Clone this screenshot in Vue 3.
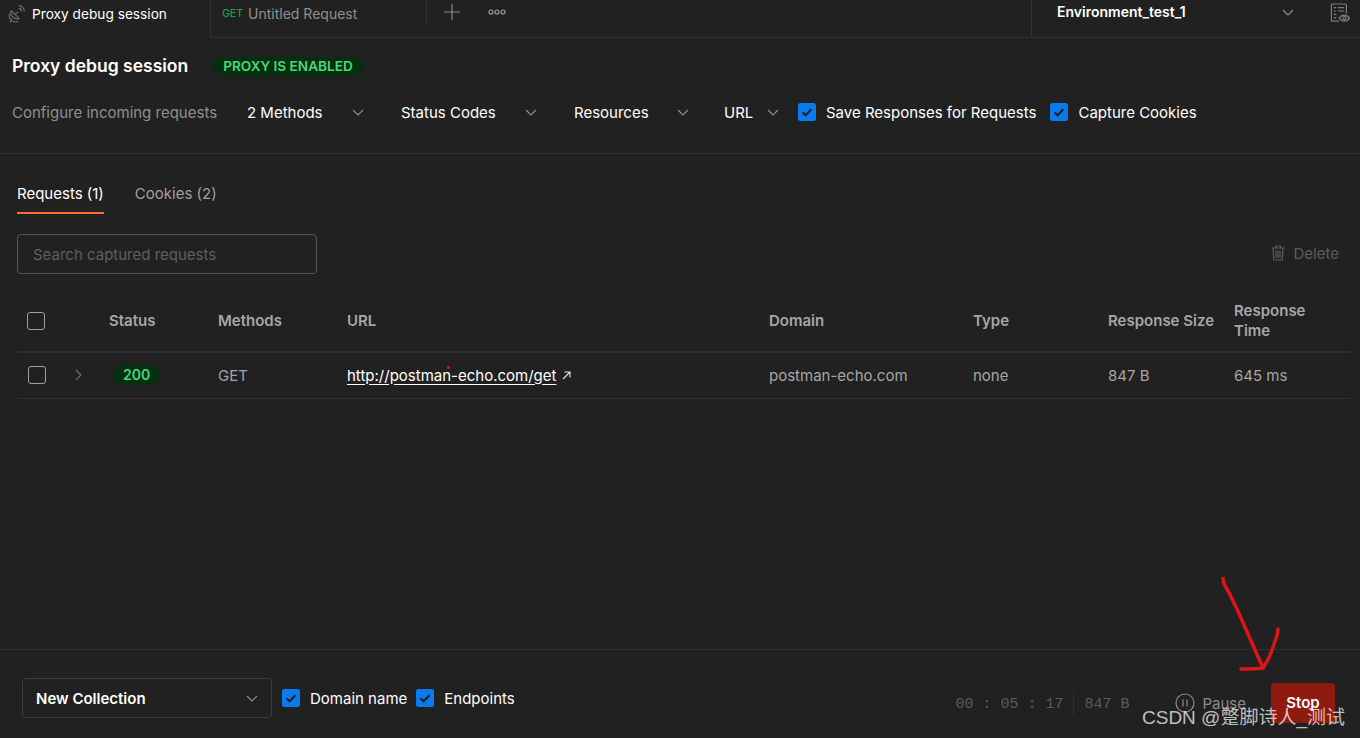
<template>
  <div class="app">
    <header class="tabbar">
      <div class="tab tab-active">
        <svg class="dish" width="18" height="18" viewBox="3 1 16 18" fill="none" stroke="#6b6b6b" stroke-width="1.2">
          <path d="M5.2 6.6a6.4 6.4 0 0 0 8 8L5.2 6.6z" />
          <path d="M3.6 9.5a6.6 6.6 0 0 0 1.2 6.4 6.6 6.6 0 0 0 7 1.6" />
          <path d="M9.2 10.6l3-3" />
          <path d="M12.6 4.4a3.2 3.2 0 0 1 3 3" />
          <path d="M12.6 1.6a6 6 0 0 1 5.8 5.8" />
          <path d="M6 15l-2 3.4" />
        </svg>
        <span>Proxy debug session</span>
      </div>
      <div class="tab tab-request">
        <span class="get">GET</span>
        <span class="req-name">Untitled Request</span>
      </div>
      <div class="tab-tools">
        <svg class="plus" width="16" height="16" viewBox="0 0 16 16" stroke="#8a8a8a" stroke-width="1.2">
          <path d="M8 0v16M0 8h16" />
        </svg>
        <svg class="more" width="18" height="6" viewBox="0 0 18 6" fill="none" stroke="#a0a0a0" stroke-width="1.1">
          <circle cx="3" cy="3" r="2" />
          <circle cx="9" cy="3" r="2" />
          <circle cx="15" cy="3" r="2" />
        </svg>
      </div>
      <div class="env">
        <span class="env-name">Environment_test_1</span>
        <svg class="chev env-chev" width="12" height="7" viewBox="0 0 12 7"><path d="M1 1l5 5 5-5" /></svg>
        <svg class="env-icon" width="20" height="20" viewBox="0 0 20 20" fill="none" stroke="#7d7d7d" stroke-width="1.2">
          <path d="M9 18.2H2.4a1 1 0 0 1-1-1V2a1 1 0 0 1 1-1h13a1 1 0 0 1 1 1v8.6" />
          <path d="M3.8 4.6h2.4M8 4.6h6M3.8 8h2.4M8 8h6M3.8 11.4h2.4M3.8 14.8h2.4" />
          <path d="M9.2 15.2c2.6-4 7.6-4 10.2 0-2.6 4-7.6 4-10.2 0z" />
          <circle cx="14.3" cy="15.2" r="1.6" />
        </svg>
      </div>
    </header>

    <section class="session">
      <div class="title-row">
        <h1>Proxy debug session</h1>
        <span class="enabled">PROXY IS ENABLED</span>
      </div>
      <div class="config-row">
        <span class="config-label">Configure incoming requests</span>
        <div v-for="f in filters" :key="f.name" class="filter" :style="{ width: f.width + 'px' }">
          <span>{{ f.name }}</span>
          <svg class="chev" width="12" height="7" viewBox="0 0 12 7"><path d="M1 1l5 5 5-5" /></svg>
        </div>
        <label class="check">
          <svg class="tick" width="18" height="18" viewBox="0 0 18 18"><rect width="18" height="18" rx="2.5" fill="#097bed" /><path d="M4.6 9.2l3 3L13.4 6.2" fill="none" stroke="#212121" stroke-width="2.2" /></svg>
          <span>Save Responses for Requests</span>
        </label>
        <label class="check cookies-check">
          <svg class="tick" width="18" height="18" viewBox="0 0 18 18"><rect width="18" height="18" rx="2.5" fill="#097bed" /><path d="M4.6 9.2l3 3L13.4 6.2" fill="none" stroke="#212121" stroke-width="2.2" /></svg>
          <span>Capture Cookies</span>
        </label>
      </div>
    </section>

    <main class="content">
      <nav class="subtabs">
        <span class="subtab subtab-active">Requests (1)</span>
        <span class="subtab">Cookies (2)</span>
      </nav>
      <div class="search-row">
        <input class="search" type="text" placeholder="Search captured requests" />
        <div class="delete">
          <svg width="14" height="16" viewBox="0 0 14 16" fill="none" stroke="#5c5c5c" stroke-width="1.2">
            <path d="M0.5 3h13M4.5 3V1h5v2M2 3l.8 12h8.4L12 3M5 5.5v7.5M7 5.5v7.5M9 5.5v7.5" />
          </svg>
          <span>Delete</span>
        </div>
      </div>

      <div class="table">
        <div class="thead grid">
          <div><span class="box head-box"></span></div>
          <div>Status</div>
          <div>Methods</div>
          <div>URL</div>
          <div>Domain</div>
          <div>Type</div>
          <div>Response Size</div>
          <div class="time-head">Response Time</div>
        </div>
        <div class="trow grid">
          <div class="first-cell">
            <span class="box"></span>
            <svg class="row-chev" width="7" height="12" viewBox="0 0 7 12" fill="none" stroke="#6e6e6e" stroke-width="1.2"><path d="M1 1l5 5-5 5" /></svg>
          </div>
          <div><span class="status">200</span></div>
          <div>GET</div>
          <div class="url-cell">
            <a class="url">http://postman-echo.com/get</a>
            <svg width="9" height="9" viewBox="0 0 9 9" fill="none" stroke="#e6e6e6" stroke-width="1.1"><path d="M1 8l7-7M2.4 1H8v5.6" /></svg>
            <i class="red-dot"></i>
          </div>
          <div>postman-echo.com</div>
          <div>none</div>
          <div>847 B</div>
          <div>645 ms</div>
        </div>
      </div>
    </main>

    <footer class="footer">
      <div class="collection">
        <span>New Collection</span>
        <svg class="chev" width="12" height="7" viewBox="0 0 12 7"><path d="M1 1l5 5 5-5" /></svg>
      </div>
      <label class="check">
        <svg class="tick" width="18" height="18" viewBox="0 0 18 18"><rect width="18" height="18" rx="2.5" fill="#097bed" /><path d="M4.6 9.2l3 3L13.4 6.2" fill="none" stroke="#212121" stroke-width="2.2" /></svg>
        <span>Domain name</span>
      </label>
      <label class="check">
        <svg class="tick" width="18" height="18" viewBox="0 0 18 18"><rect width="18" height="18" rx="2.5" fill="#097bed" /><path d="M4.6 9.2l3 3L13.4 6.2" fill="none" stroke="#212121" stroke-width="2.2" /></svg>
        <span>Endpoints</span>
      </label>
      <div class="controls">
        <span class="mono">00 : 05 : 17</span>
        <i class="divider"></i>
        <span class="mono">847 B</span>
        <div class="pause">
          <svg width="20" height="20" viewBox="0 0 20 20" fill="none" stroke="#8c8c8c" stroke-width="1.2">
            <circle cx="10" cy="10" r="9" />
            <path d="M8 6.5v7M12 6.5v7" />
          </svg>
          <span>Pause</span>
        </div>
        <button class="stop">Stop</button>
      </div>
    </footer>

    <svg class="arrow" width="70" height="100" viewBox="0 0 70 100" fill="none" stroke="#e01414" stroke-width="3.5" stroke-linecap="round" stroke-linejoin="round">
      <path d="M3 1c0 5 2 8 4 11 3 5 6 12 10 20l26 59" />
      <path d="M58 52c0 6-3 12-5 18-2 7-6 15-10 21-6 1-15 1-22 1" />
    </svg>
    <div class="watermark">CSDN @蹩脚诗人_测试</div>
  </div>
</template>

<script setup>
const filters = [
  { name: "2 Methods", width: 154 },
  { name: "Status Codes", width: 173 },
  { name: "Resources", width: 150 },
  { name: "URL", width: 74 },
];
</script>

<style>
html,
body {
  margin: 0;
  background: #212121;
}
</style>

<style scoped>
.app {
  position: relative;
  display: flex;
  flex-direction: column;
  height: 738px;
  overflow: hidden;
  background: #212121;
  color: #fff;
  font-family: Inter, "Noto Sans", sans-serif;
  font-size: 15px;
}

.tabbar {
  display: flex;
  height: 38px;
  box-sizing: border-box;
  flex: none;
}

.tab {
  display: flex;
  align-items: center;
  box-sizing: border-box;
  height: 38px;
  padding-bottom: 10px;
}

.tab-active {
  width: 211px;
  padding-left: 8px;
  gap: 6px;
  border-right: 1px solid #303030;
  font-size: 13.7px;
}

.tab-request {
  width: 216px;
  padding-left: 11px;
  gap: 5px;
  border-bottom: 1px solid #303030;
}

.get {
  color: #17a34a;
  font-size: 10.5px;
  font-weight: 500;
}

.req-name {
  color: #8f8f8f;
  font-size: 14px;
}

.tab-tools {
  position: relative;
  display: flex;
  align-items: flex-start;
  width: 604px;
  height: 38px;
  box-sizing: border-box;
  border-bottom: 1px solid #303030;
  padding: 4px 0 0 17px;
}

.tab-tools::before {
  content: "";
  position: absolute;
  left: -1px;
  top: 0;
  height: 25px;
  width: 1px;
  background: #303030;
}

.plus {
  margin-right: 28px;
}

.more {
  margin-top: 5px;
}

.env {
  display: flex;
  align-items: flex-start;
  flex: 1;
  height: 38px;
  box-sizing: border-box;
  border-left: 1px solid #303030;
  border-bottom: 1px solid #303030;
  padding-left: 25px;
}

.env-name {
  width: 225px;
  margin-top: 3px;
  font-size: 14px;
  font-weight: 600;
}

.env-chev {
  margin-top: 9px;
  margin-right: 36px;
}

.env-icon {
  margin-top: 3px;
}

.chev {
  fill: none;
  stroke: #8c8c8c;
  stroke-width: 1.2;
  flex: none;
}

.session {
  flex: none;
  height: 116px;
  box-sizing: border-box;
  border-bottom: 1px solid #303030;
  padding: 18px 0 0 12px;
}

.title-row {
  display: flex;
  align-items: center;
  height: 20px;
}

h1 {
  margin: 0 25px 0 0;
  font-size: 17.5px;
  font-weight: 600;
  line-height: 20px;
}

.enabled {
  padding: 0 10px;
  border-radius: 10px;
  background: #04300f;
  color: #4fd47a;
  font-size: 13.6px;
  font-weight: 600;
  line-height: 19px;
}

.config-row {
  display: flex;
  align-items: center;
  height: 20px;
  margin-top: 26px;
}

.config-label {
  width: 235px;
  color: #8f8f8f;
}

.filter {
  display: flex;
  align-items: center;
  justify-content: space-between;
  box-sizing: border-box;
  padding-right: 37px;
}

.filter:nth-child(4) {
  padding-right: 35px;
}

.filter:nth-child(5) {
  padding-right: 19px;
}

.check {
  display: flex;
  align-items: center;
  gap: 10px;
}

.tick {
  flex: none;
}

.cookies-check {
  margin-left: 14px;
}

.content {
  flex: 1;
  padding: 0 10px 0 17px;
}

.subtabs {
  display: flex;
  gap: 31px;
  padding-top: 29px;
}

.subtab {
  height: 31px;
  box-sizing: border-box;
  border-bottom: 2px solid transparent;
  color: #a0a0a0;
  line-height: 21px;
}

.subtab-active {
  color: #fff;
  border-bottom-color: #ff6c37;
}

.search-row {
  display: flex;
  align-items: center;
  justify-content: space-between;
  margin-top: 20px;
  padding-right: 11px;
}

.search {
  width: 300px;
  height: 40px;
  box-sizing: border-box;
  padding: 0 15px;
  border: 1px solid #555;
  border-radius: 4px;
  outline: none;
  background: transparent;
  color: #fff;
  font-family: inherit;
  font-size: 15px;
}

.search::placeholder {
  color: #5f5f5f;
  opacity: 1;
}

.delete {
  display: flex;
  align-items: center;
  gap: 9px;
  margin-top: -2px;
  color: #5c5c5c;
}

.table {
  margin-top: 17px;
}

.grid {
  display: grid;
  grid-template-columns: 92px 109px 129px 422px 204px 135px 126px 116px;
  align-items: center;
}

.thead {
  height: 60px;
  border-bottom: 2px solid #303030;
  color: #a6a6a6;
  font-weight: 600;
  line-height: 20px;
}

.time-head {
  max-width: 90px;
}

.trow {
  height: 44px;
  padding-bottom: 1px;
  border-bottom: 1px solid #303030;
  color: #a6a6a6;
}

.box {
  display: block;
  flex: none;
  width: 18px;
  height: 18px;
  box-sizing: border-box;
  border: 1px solid #a0a0a0;
  border-radius: 3px;
}

.head-box {
  margin-left: 10px;
}

.first-cell {
  display: flex;
  align-items: center;
  gap: 29px;
  padding-left: 11px;
}

.status {
  display: inline-block;
  margin-left: 4px;
  padding: 0 10px;
  border-radius: 10px;
  background: #04300f;
  color: #4fd47a;
  font-size: 14px;
  font-weight: 600;
  line-height: 20px;
}

.url-cell {
  position: relative;
  display: flex;
  align-items: center;
  gap: 6px;
}

.url {
  color: #fff;
  text-decoration: underline;
  text-underline-offset: 3px;
}

.red-dot {
  position: absolute;
  left: 100px;
  top: 0;
  width: 3px;
  height: 3px;
  border-radius: 50%;
  background: #e01414;
}

.footer {
  display: flex;
  align-items: center;
  flex: none;
  height: 89px;
  box-sizing: border-box;
  border-top: 1px solid #303030;
  padding: 0 25px 0 22px;
}

.collection {
  display: flex;
  align-items: center;
  justify-content: space-between;
  width: 250px;
  height: 40px;
  box-sizing: border-box;
  padding: 0 13px;
  margin: 8px 10px 0 0;
  border: 1px solid #3d3d3d;
  border-radius: 4px;
  font-weight: 600;
}

.footer .check {
  margin: 8px 9px 0 0;
}

.controls {
  display: flex;
  align-items: center;
  margin: 18px 0 0 auto;
}

.mono {
  margin-top: 3px;
  color: #5a5a5a;
  font-family: "Liberation Mono", monospace;
  font-size: 15px;
}

.divider {
  width: 1px;
  height: 25px;
  margin: 0 10px;
  background: #303030;
}

.pause {
  display: flex;
  align-items: center;
  gap: 7px;
  margin-left: 46px;
  color: #8c8c8c;
}

.stop {
  width: 64px;
  height: 40px;
  margin-left: 25px;
  padding: 0 0 2px;
  border: none;
  border-radius: 4px;
  background: #8e1a10;
  color: #fff;
  font-family: inherit;
  font-size: 15px;
  font-weight: 600;
}

.arrow {
  position: absolute;
  left: 1220px;
  top: 577px;
}

.watermark {
  position: absolute;
  left: 1142px;
  top: 704px;
  color: rgba(255, 255, 255, 0.72);
  font-family: "Liberation Sans", "Noto Sans CJK SC", sans-serif;
  font-size: 19px;
  line-height: 27px;
  white-space: nowrap;
}
</style>
